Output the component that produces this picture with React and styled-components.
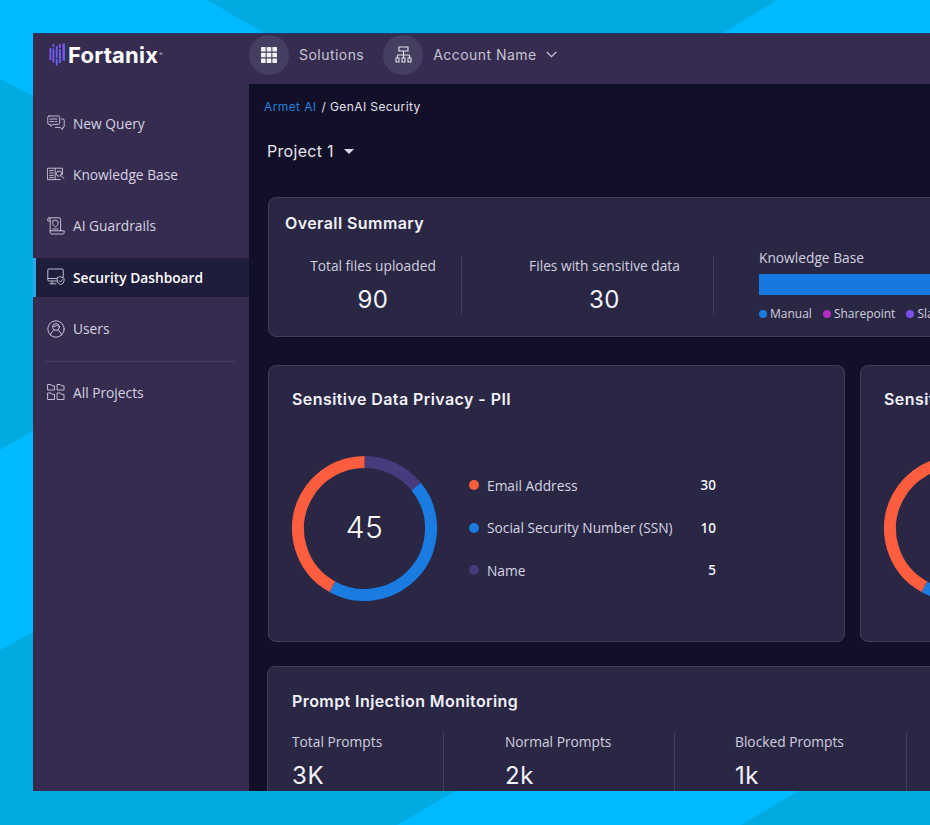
import React from "react";
import styled, { createGlobalStyle } from "styled-components";

const HEAD = `Inter, "Liberation Sans", sans-serif`;
const BODY = `"Open Sans", "Noto Sans", sans-serif`;

const GlobalStyle = createGlobalStyle`
  html, body {
    margin: 0;
    height: 100%;
    background: #00baff;
    overflow: hidden;
  }
  * {
    box-sizing: border-box;
  }
`;

const Backdrop = styled.svg`
  position: absolute;
  top: 0;
  left: 0;
  width: 930px;
  height: 825px;
`;

const Page = styled.div`
  position: relative;
  width: 930px;
  height: 825px;
  padding: 33px 0 0 33px;
  overflow: hidden;
`;

const Window = styled.div`
  position: relative;
  width: 897px;
  height: 758px;
  display: flex;
  flex-direction: column;
  overflow: hidden;
  background: #352c50;
  box-shadow: inset 0 1px 0 #1d3b70;
`;

const TopBar = styled.header`
  flex: 0 0 51px;
  display: flex;
  align-items: center;
  padding: 0 0 8px 16px;
`;

const Logo = styled.div`
  width: 200px;
  display: flex;
  align-items: center;
  gap: 2px;
  font-family: ${HEAD};
  font-size: 22px;
  font-weight: 700;
  letter-spacing: 0.2px;
  color: #ffffff;
  sup {
    font-size: 5px;
    font-weight: 400;
    align-self: flex-start;
    margin: 9px 0 0 -1px;
    color: #c9c6d8;
  }
`;

const RoundButton = styled.div`
  flex: none;
  width: 40px;
  height: 40px;
  border-radius: 50%;
  background: #463e60;
  display: flex;
  align-items: center;
  justify-content: center;
`;

const TopLabel = styled.span`
  margin-left: 10px;
  margin-right: ${(p) => p.$gap || 0}px;
  font-family: ${HEAD};
  font-size: 14px;
  color: #c6c3d3;
  letter-spacing: 0.46px;
  white-space: nowrap;
`;

const Shell = styled.div`
  flex: 1;
  display: flex;
  min-height: 0;
`;

const Sidebar = styled.nav`
  flex: 0 0 216px;
  padding-top: 19.5px;
  display: flex;
  flex-direction: column;
  gap: 12.4px;
`;

const NavItem = styled.div`
  height: 39px;
  display: flex;
  align-items: center;
  gap: 8px;
  padding-left: ${(p) => (p.$active ? 11 : 14)}px;
  border-left: ${(p) => (p.$active ? "3px solid #2aa5e6" : "none")};
  background: ${(p) => (p.$active ? "#1f1d3c" : "transparent")};
  font-family: ${BODY};
  font-size: 13.75px;
  font-weight: ${(p) => (p.$active ? 600 : 400)};
  color: ${(p) => (p.$active ? "#ffffff" : "#d6d3e2")};
  white-space: nowrap;
`;

const NavRule = styled.hr`
  width: 192px;
  height: 1px;
  margin: 0.5px 0 -1.5px 11px;
  border: 0;
  background: #463c63;
`;

const Main = styled.main`
  flex: 1;
  min-width: 0;
  overflow: hidden;
  padding: 15px 0 0 19px;
  background: #120f29;
`;

const Crumbs = styled.div`
  margin-left: -4px;
  height: 16px;
  line-height: 16px;
  font-family: ${HEAD};
  font-size: 12px;
  letter-spacing: 0.4px;
  color: #e4e2ee;
  span {
    color: #1f7fdc;
    margin-right: 5px;
  }
`;

const ProjectPicker = styled.div`
  margin: 24px 0 0 -1px;
  height: 24px;
  display: flex;
  align-items: center;
  gap: 10px;
  font-family: ${HEAD};
  font-size: 16px;
  letter-spacing: 0.3px;
  color: #e6e4ef;
  &::after {
    content: "";
    border-left: 5px solid transparent;
    border-right: 5px solid transparent;
    border-top: 5.5px solid #dcdae6;
    margin-top: 1px;
  }
`;

const Card = styled.section`
  flex: none;
  width: ${(p) => p.$width || 1000}px;
  height: ${(p) => p.$height}px;
  padding: ${(p) => p.$padding};
  background: #2a2745;
  border: 1px solid #403e5c;
  border-radius: 8px;
`;

const SummaryCard = styled(Card)`
  margin-top: 34px;
`;

const CardTitle = styled.h2`
  margin: -1px 0 0;
  height: 20px;
  line-height: 20px;
  font-family: ${HEAD};
  font-size: 16px;
  font-weight: 600;
  letter-spacing: 0.42px;
  color: #f2f1f7;
  white-space: nowrap;
`;

const SummaryRow = styled.div`
  margin-top: 16px;
  display: flex;
  align-items: flex-start;
`;

const SummaryStat = styled.div`
  width: ${(p) => p.$width}px;
  height: 58px;
  margin-top: 7px;
  padding-left: ${(p) => p.$inset || 0}px;
  border-right: 1px solid #403e5c;
  text-align: center;
`;

const StatLabel = styled.div`
  height: 20px;
  line-height: 20px;
  font-family: ${BODY};
  font-size: 13.75px;
  color: #d2d0df;
  white-space: nowrap;
`;

const StatValue = styled.div`
  margin-top: 9px;
  height: 30px;
  line-height: 30px;
  font-family: ${HEAD};
  font-size: 24px;
  font-weight: 400;
  letter-spacing: 0.6px;
  color: #f4f3f8;
`;

const KnowledgeBase = styled.div`
  margin: -1px 0 0 45px;
  width: 400px;
`;

const KnowledgeBar = styled.div`
  margin-top: 6px;
  height: 21px;
  background: #1679e0;
`;

const KnowledgeLegend = styled.div`
  margin-top: 11px;
  display: flex;
  gap: 11px;
  height: 16px;
  line-height: 16px;
  font-family: ${BODY};
  font-size: 12px;
  color: #d2d0df;
`;

const KnowledgeKey = styled.span`
  display: flex;
  align-items: center;
  gap: 3px;
  &::before {
    content: "";
    width: 8px;
    height: 8px;
    border-radius: 50%;
    background: ${(p) => p.$color};
  }
`;

const CardRow = styled.div`
  margin-top: 28px;
  display: flex;
  gap: 15px;
`;

const DonutBody = styled.div`
  margin-top: 47px;
  display: flex;
  align-items: center;
`;

const DonutWrap = styled.div`
  position: relative;
  flex: none;
  width: 145px;
  height: 145px;
`;

const DonutTotal = styled.div`
  position: absolute;
  inset: 0 0 3px 0;
  display: flex;
  align-items: center;
  justify-content: center;
  font-family: ${HEAD};
  font-size: 30px;
  font-weight: 300;
  letter-spacing: 0.5px;
  color: #ffffff;
`;

const DonutLegend = styled.ul`
  list-style: none;
  margin: -2px 0 0 32px;
  padding: 0;
  width: 247px;
  display: flex;
  flex-direction: column;
  gap: 22.5px;
`;

const LegendRow = styled.li`
  height: 20px;
  display: flex;
  align-items: center;
  gap: 8px;
  font-family: ${BODY};
  font-size: 13.75px;
  color: #d6d4e2;
  white-space: nowrap;
`;

const LegendDot = styled.i`
  width: 10px;
  height: 10px;
  border-radius: 50%;
  background: ${(p) => p.$color};
`;

const LegendCount = styled.b`
  margin-left: auto;
  font-weight: 600;
  font-size: 13.5px;
  color: #f2f1f7;
`;

const PromptCard = styled(Card)`
  margin: 24px 0 0 -1px;
`;

const PromptRow = styled.div`
  margin-top: 21px;
  display: flex;
`;

const PromptStat = styled.div`
  width: ${(p) => p.$width}px;
  height: 70px;
  padding-left: ${(p) => p.$inset || 0}px;
  border-right: 1px solid #403e5c;
`;

const IconBox = styled.svg`
  flex: none;
  width: 18px;
  height: 18px;
  fill: none;
  stroke: #d0cddc;
  stroke-width: 0.9;
  stroke-linecap: round;
  stroke-linejoin: round;
`;

const QueryIcon = () => (
  <IconBox viewBox="0 0 18 18">
    <path d="M2 2h9.5a1.2 1.2 0 0 1 1.2 1.2v6a1.2 1.2 0 0 1-1.2 1.2H6l-2.2 2v-2H2A1.2 1.2 0 0 1 .8 9.2v-6A1.2 1.2 0 0 1 2 2z" />
    <path d="M3 5h7M3 7.6h4M8.5 7.6h1.5" />
    <path d="M14.4 5H16a1.2 1.2 0 0 1 1.2 1.2v6a1.2 1.2 0 0 1-1.2 1.2h-.4v2.2l-2.6-2.2H8.4" />
  </IconBox>
);

const BookIcon = () => (
  <IconBox viewBox="0 0 18 18">
    <path d="M.8 3.2h7.4v11.4H.8z" />
    <path d="M2.6 5.6h3.8M2.6 8h3.8M2.6 10.4h3.8M2.6 12.6h3.8" />
    <path d="M8.2 3.2h7.2v6.4M8.2 14.6h5" />
    <circle cx="12" cy="8.6" r="2.6" />
    <path d="M13.9 10.5l3.1 3" />
  </IconBox>
);

const ScrollIcon = () => (
  <IconBox viewBox="0 0 18 18">
    <path d="M3.2 13V2.2A1.4 1.4 0 0 0 1.8 .8h10.4a1.4 1.4 0 0 1 1.4 1.4v11.6" />
    <path d="M1.8 .8A1.2 1.2 0 0 0 .8 2v2h2.4" />
    <path d="M8.4 3.2l2.6 1v2.2c0 1.7-1.1 2.8-2.6 3.4-1.5-.6-2.6-1.7-2.6-3.4V4.2z" />
    <path d="M5.6 12h5.4" />
    <path d="M3.2 13.8h14v1.6a1.6 1.6 0 0 1-1.6 1.6H5a1.8 1.8 0 0 1-1.8-1.8v-1.4z" />
  </IconBox>
);

const MonitorIcon = () => (
  <IconBox viewBox="0 0 18 18">
    <path d="M10 13H1.8A1 1 0 0 1 .8 12V2A1 1 0 0 1 1.8 1h13.4a1 1 0 0 1 1 1v6.5" />
    <path d="M.8 10.5h8.7M5 13v2.6M3 15.8h6" />
    <path d="M13.6 8.8l3.4 1.2v2.6c0 2-1.4 3.3-3.4 4-2-.7-3.4-2-3.4-4V10z" />
    <path d="M12.2 12.8l1.1 1.1 2-2.2" />
  </IconBox>
);

const UserIcon = () => (
  <IconBox viewBox="0 0 18 18">
    <circle cx="9" cy="9" r="8.2" />
    <circle cx="9" cy="7" r="3.4" />
    <path d="M5.7 6.4c1.5.2 3.3-.1 4.6-1.3.6.7 1.3 1.1 2 1.3" />
    <path d="M3.5 15c.4-2.8 2.3-4.3 3.8-4.7M14.5 15c-.4-2.8-2.3-4.3-3.8-4.7" />
  </IconBox>
);

const FoldersIcon = () => (
  <IconBox viewBox="0 0 18 18">
    <path d="M1 1.5h3l1 1.4h2.5v4.1H1z" />
    <path d="M10.5 1.5h3l1 1.4H17v4.1h-6.5z" />
    <path d="M1 10h3l1 1.4h2.5v5.1H1z" />
    <path d="M10.5 10h3l1 1.4H17v5.1h-6.5z" />
  </IconBox>
);

const FortanixMark = () => (
  <svg width="17" height="23" viewBox="0 0 17 23">
    <defs>
      <linearGradient id="fortanix-bars" x1="0" x2="1" y1="0" y2="0">
        <stop offset="0" stopColor="#9a3df0" />
        <stop offset="1" stopColor="#3f7ff0" />
      </linearGradient>
    </defs>
    <g fill="url(#fortanix-bars)">
      <rect x="0.5" y="5" width="1.8" height="12" />
      <rect x="3.5" y="1" width="1.8" height="3" />
      <rect x="3.5" y="5.5" width="1.8" height="14" />
      <rect x="6.8" y="3" width="1.8" height="12" />
      <rect x="6.8" y="16" width="1.8" height="6.5" />
      <rect x="10" y="1" width="1.8" height="4" />
      <rect x="10" y="6" width="1.8" height="14" />
      <rect x="13.5" y="0.5" width="2.4" height="17" />
    </g>
  </svg>
);

const GridIcon = () => (
  <svg width="16" height="16" viewBox="0 0 16 16" fill="#f1f0f5">
    {[0, 5.7, 11.4].flatMap((y) =>
      [0, 5.7, 11.4].map((x) => <rect key={`${x}-${y}`} x={x} y={y} width="4.6" height="4.6" rx="0.5" />)
    )}
  </svg>
);

const OrgIcon = () => (
  <svg width="17" height="18" viewBox="0 0 17 18" fill="none" stroke="#e4e2ec" strokeWidth="1.1">
    <path d="M4 1h9v4H4zM8.5 5v7M2.5 9h12M2.5 9v3M14.5 9v3" />
    <path d="M1 12h3v4H1zM7 12h3v4H7zM13 12h3v4h-3z" />
  </svg>
);

const Chevron = () => (
  <svg width="11" height="7" viewBox="0 0 11 7" fill="none" stroke="#c6c3d3" strokeWidth="1.3">
    <path d="M.8 1l4.7 4.7L10.2 1" />
  </svg>
);

// angles in degrees, clockwise from twelve o'clock
const DONUT_SEGMENTS = [
  { color: "#463b7c", from: 0, to: 51 },
  { color: "#1a7be0", from: 51, to: 209 },
  { color: "#fb5d3e", from: 209, to: 360 },
];

const Donut = ({ total }) => (
  <DonutWrap>
    <svg width="145" height="145" viewBox="0 0 145 145" fill="none">
      {DONUT_SEGMENTS.map((s) => (
        <circle
          key={s.color}
          cx="72.5"
          cy="72.5"
          r="66.5"
          stroke={s.color}
          strokeWidth="12"
          pathLength="360"
          strokeDasharray={`${s.to - s.from} 360`}
          transform={`rotate(${s.from - 90} 72.5 72.5)`}
        />
      ))}
    </svg>
    <DonutTotal>{total}</DonutTotal>
  </DonutWrap>
);

const NAV = [
  { label: "New Query", Icon: QueryIcon },
  { label: "Knowledge Base", Icon: BookIcon },
  { label: "AI Guardrails", Icon: ScrollIcon },
  { label: "Security Dashboard", Icon: MonitorIcon, active: true },
  { label: "Users", Icon: UserIcon },
];

const PRIVACY = [
  { label: "Email Address", count: 30, color: "#fb5d3e" },
  { label: "Social Security Number (SSN)", count: 10, color: "#1a7be0" },
  { label: "Name", count: 5, color: "#463b7c" },
];

const PrivacyCard = ({ title }) => (
  <Card $width={577} $height={277} $padding="24px 0 0 23px">
    <CardTitle>{title}</CardTitle>
    <DonutBody>
      <Donut total={45} />
      <DonutLegend>
        {PRIVACY.map((row) => (
          <LegendRow key={row.label}>
            <LegendDot $color={row.color} />
            {row.label}
            <LegendCount>{row.count}</LegendCount>
          </LegendRow>
        ))}
      </DonutLegend>
    </DonutBody>
  </Card>
);

const App = () => {
  return (
    <Page>
      <GlobalStyle />
      <Backdrop viewBox="0 0 930 825" fill="#01abe2">
        <polygon points="0,79 33,96 33,431 0,450" />
        <polygon points="0,650 33,632 33,790 457,790 397,825 0,825" />
        <polygon points="207,0 264,33 723,33 777,0" />
        <polygon points="800,790 741,825 930,825 930,790" />
      </Backdrop>
      <Window>
        <TopBar>
          <Logo>
            <FortanixMark />
            Fortanix<sup>®</sup>
          </Logo>
          <RoundButton>
            <GridIcon />
          </RoundButton>
          <TopLabel $gap={19}>Solutions</TopLabel>
          <RoundButton>
            <OrgIcon />
          </RoundButton>
          <TopLabel $gap={9}>Account Name</TopLabel>
          <Chevron />
        </TopBar>
        <Shell>
          <Sidebar>
            {NAV.map(({ label, Icon, active }) => (
              <NavItem key={label} $active={active}>
                <Icon />
                {label}
              </NavItem>
            ))}
            <NavRule />
            <NavItem>
              <FoldersIcon />
              All Projects
            </NavItem>
          </Sidebar>
          <Main>
            <Crumbs>
              <span>Armet AI</span>/ GenAI Security
            </Crumbs>
            <ProjectPicker>Project 1</ProjectPicker>
            <SummaryCard $height={140} $padding="16px 0 0 16px">
              <CardTitle>Overall Summary</CardTitle>
              <SummaryRow>
                <SummaryStat $width={177}>
                  <StatLabel>Total files uploaded</StatLabel>
                  <StatValue>90</StatValue>
                </SummaryStat>
                <SummaryStat $width={252} $inset={34}>
                  <StatLabel>Files with sensitive data</StatLabel>
                  <StatValue>30</StatValue>
                </SummaryStat>
                <KnowledgeBase>
                  <StatLabel>Knowledge Base</StatLabel>
                  <KnowledgeBar />
                  <KnowledgeLegend>
                    <KnowledgeKey $color="#1a7be0">Manual</KnowledgeKey>
                    <KnowledgeKey $color="#b22cc0">Sharepoint</KnowledgeKey>
                    <KnowledgeKey $color="#7a4fe8">Slack</KnowledgeKey>
                  </KnowledgeLegend>
                </KnowledgeBase>
              </SummaryRow>
            </SummaryCard>
            <CardRow>
              <PrivacyCard title="Sensitive Data Privacy - PII" />
              <PrivacyCard title="Sensitive Data Privacy - PCI" />
            </CardRow>
            <PromptCard $height={200} $padding="25px 0 0 24px">
              <CardTitle>Prompt Injection Monitoring</CardTitle>
              <PromptRow>
                <PromptStat $width={152}>
                  <StatLabel>Total Prompts</StatLabel>
                  <StatValue>3K</StatValue>
                </PromptStat>
                <PromptStat $width={231} $inset={61}>
                  <StatLabel>Normal Prompts</StatLabel>
                  <StatValue>2k</StatValue>
                </PromptStat>
                <PromptStat $width={232} $inset={60}>
                  <StatLabel>Blocked Prompts</StatLabel>
                  <StatValue>1k</StatValue>
                </PromptStat>
              </PromptRow>
            </PromptCard>
          </Main>
        </Shell>
      </Window>
    </Page>
  );
};

export default App;
